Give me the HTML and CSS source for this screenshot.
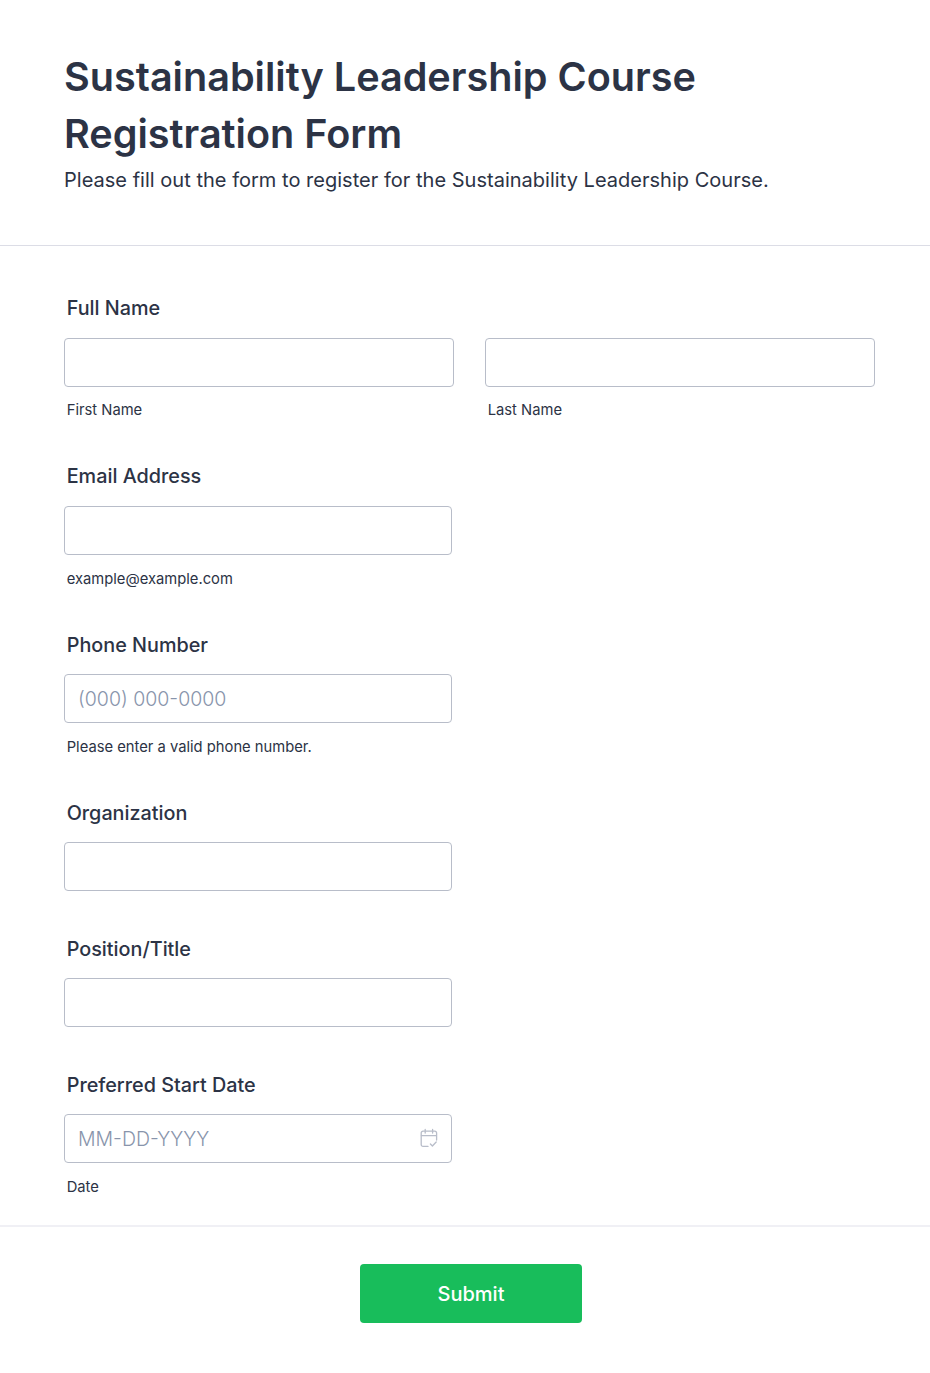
FILE: index.html
```html
<!DOCTYPE html>
<html lang="en">

<head>
    <meta charset="UTF-8">
    <meta name="viewport" content="width=device-width, initial-scale=1.0">
    <title>Sustainability Leadership Course Registration Form</title>
    <link rel="stylesheet" href="styles.css">
</head>

<body>
    <form class="form">
        <header class="form-header">
            <h1>Sustainability Leadership Course Registration Form</h1>
            <p>Please fill out the form to register for the Sustainability Leadership Course.</p>
        </header>

        <div class="fields">
            <div class="field">
                <label class="field-label">Full Name</label>
                <div class="name-row">
                    <div class="name-part">
                        <input type="text" class="input">
                        <span class="hint">First Name</span>
                    </div>
                    <div class="name-part">
                        <input type="text" class="input">
                        <span class="hint">Last Name</span>
                    </div>
                </div>
            </div>

            <div class="field">
                <label class="field-label">Email Address</label>
                <input type="email" class="input short">
                <span class="hint">example@example.com</span>
            </div>

            <div class="field">
                <label class="field-label">Phone Number</label>
                <input type="tel" class="input short" placeholder="(000) 000-0000">
                <span class="hint">Please enter a valid phone number.</span>
            </div>

            <div class="field no-hint">
                <label class="field-label">Organization</label>
                <input type="text" class="input short">
            </div>

            <div class="field no-hint">
                <label class="field-label">Position/Title</label>
                <input type="text" class="input short">
            </div>

            <div class="field last">
                <label class="field-label">Preferred Start Date</label>
                <div class="date-wrap">
                    <input type="text" class="input short" placeholder="MM-DD-YYYY">
                    <svg class="date-icon" viewBox="0 0 18 20" fill="none" stroke="#b8bdc9" stroke-width="1.3" stroke-linecap="round" stroke-linejoin="round">
                        <path d="M8 18.4H3a1.8 1.8 0 0 1-1.8-1.8V5A1.8 1.8 0 0 1 3 3.2h11.8A1.8 1.8 0 0 1 16.6 5v7"/>
                        <path d="M1.4 7.6h15"/>
                        <path d="M5.2 1.4v3.6M12.6 1.4v3.6"/>
                        <path d="M10.4 16l2 2 3.8-4"/>
                    </svg>
                </div>
                <span class="hint">Date</span>
            </div>
        </div>

        <div class="form-footer">
            <button type="button" class="submit">Submit</button>
        </div>
    </form>
</body>

</html>
```

FILE: styles.css
```css
* {
    box-sizing: border-box;
}

body {
    margin: 0;
    background-color: #fff;
    color: #2c3345;
    font-family: Inter, "Liberation Sans", sans-serif;
}

.form {
    display: flex;
    flex-direction: column;
    min-height: 1373px;
}

.form-header {
    height: 246px;
    padding: 49px 64px 0;
    border-bottom: 1px solid #dcdde6;
}

.form-header h1 {
    margin: 0;
    font-size: 39.6px;
    line-height: 57px;
    font-weight: 600;
}

.form-header p {
    margin: 5px 0 0;
    font-size: 20px;
    line-height: 24px;
    letter-spacing: 0.02px;
    color: #2c3345;
}

.fields {
    padding: 49.2px 55px 0 64px;
    height: 979px;
}

.field {
    display: flex;
    flex-direction: column;
    align-items: flex-start;
    height: 168.2px;
}

.field.no-hint {
    height: 136px;
}

.field.last {
    height: auto;
}

.field-label {
    padding-left: 2.7px;
    margin-bottom: 16.6px;
    font-size: 19.8px;
    line-height: 26px;
    font-weight: 500;
}

.name-row {
    display: flex;
    gap: 31px;
    width: 100%;
}

.name-part {
    flex: 1;
}

.input {
    display: block;
    width: 100%;
    height: 49px;
    padding: 0 13px;
    background: #fff;
    border: 1px solid #b8bdc9;
    border-radius: 4px;
    font-family: inherit;
    font-size: 19.5px;
    font-weight: 300;
    color: #2c3345;
}

.input::placeholder {
    color: #8894ab;
    opacity: 1;
}

.input.short {
    width: 388px;
}

.hint {
    display: block;
    padding-left: 2.7px;
    margin-top: 13.55px;
    font-size: 14.75px;
    line-height: 20px;
    color: #2c3345;
}

.date-wrap {
    position: relative;
}

.date-icon {
    position: absolute;
    top: 14px;
    right: 14px;
    width: 18px;
    height: 20px;
}

.form-footer {
    display: flex;
    justify-content: center;
    padding: 37px 0 0 12px;
    border-top: 2px solid #f0f0f5;
}

.submit {
    width: 222px;
    height: 59px;
    background-color: #18bd5b;
    border: 0;
    border-radius: 4px;
    color: #fff;
    font-family: inherit;
    font-size: 20px;
    font-weight: 500;
}
```
